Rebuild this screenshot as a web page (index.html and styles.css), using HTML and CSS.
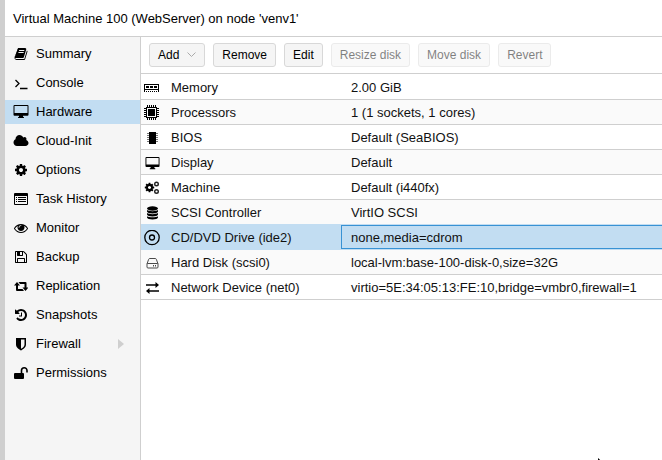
FILE: index.html
```html
<!DOCTYPE html>
<html lang="en">
<head>
<meta charset="utf-8">
<title>Virtual Machine 100</title>
<link rel="stylesheet" href="styles.css">
</head>
<body>
<svg class="defs" aria-hidden="true">
  <symbol id="cog" viewBox="0 0 1792 1792"><path d="M1152 896q0-106-75-181t-181-75-181 75-75 181 75 181 181 75 181-75 75-181zm512-109v222q0 12-8 23t-20 13l-185 28q-19 54-39 91 35 50 107 138 10 12 10 25t-9 23q-27 37-99 108t-94 71q-12 0-26-9l-138-108q-44 23-91 38-16 136-29 186-7 28-36 28h-222q-14 0-24.500-8.500t-11.500-21.500l-28-184q-49-16-90-37l-141 107q-10 9-25 9-14 0-25-11-126-114-165-168-7-10-7-23 0-12 8-23 15-21 51-66.500t54-70.500q-27-50-41-99l-183-27q-13-2-21-12.500t-8-23.500v-222q0-12 8-23t19-13l186-28q14-46 39-92-40-57-107-138-10-12-10-24 0-10 9-23 26-36 98.500-107.500t94.500-71.500q13 0 26 10l138 107q44-23 91-38 16-136 29-186 7-28 36-28h222q14 0 24.500 8.500t11.500 21.500l28 184q49 16 90 37l142-107q9-9 24-9 13 0 25 10 129 119 165 170 7 8 7 22 0 12-8 23-15 21-51 66.500t-54 70.500q26 50 41 98l183 28q13 2 21 12.500t8 23.500z"/></symbol>
  <symbol id="desktop" viewBox="0 0 16 16"><path fill-rule="evenodd" d="M1.500 1h13a1 1 0 0 1 1 1v8.700a1 1 0 0 1-1 1h-4.500v1l1 .6v.7h-6v-.7l1-.6v-1h-4.500a1 1 0 0 1-1-1v-8.700a1 1 0 0 1 1-1zm0 1v7h13v-7z"/></symbol>
</svg>
<main class="panel">
  <header class="title">Virtual Machine 100 (WebServer) on node 'venv1'</header>
  <div class="body">
    <nav class="menu">
      <a href="#summary"><svg viewBox="0 0 1792 1792"><path d="M1703 478q40 57 18 129l-275 906q-19 64-76.500 107.500t-122.500 43.500h-923q-77 0-148.500-53.500t-99.500-131.500q-24-67-2-127 0-4 3-27t4-37q1-8-3-21.500t-3-19.500q2-11 8-21t16.500-23.500 16.500-23.500q23-38 45-91.500t30-91.500q3-10 .5-30t-.5-28q3-11 17-28t17-23q21-36 42-92t25-90q1-9-2.500-32t.5-28q4-13 22-30.500t22-22.500q19-26 42.500-84.500t27.500-96.500q1-8-3-25.500t-2-26.500q2-8 9-18t18-23 17-21q8-12 16.500-30.500t15-35 16-36 19.500-32 26.500-23.500 36-11.500 47.500 5.500l-1 3q38-9 51-9h761q74 0 114 56t18 130l-274 906q-36 119-71.500 153.500t-128.500 34.500h-869q-27 0-38 15-11 16-1 43 24 70 144 70h923q29 0 56-15.500t35-41.500l300-987q7-22 5-57 38 15 59 43zm-1064 2q-4 13 2 22.500t20 9.500h608q13 0 25.500-9.500t16.500-22.500l21-64q4-13-2-22.500t-20-9.500h-608q-13 0-25.500 9.500t-16.500 22.500zm-83 256q-4 13 2 22.500t20 9.500h608q13 0 25.500-9.500t16.500-22.500l21-64q4-13-2-22.500t-20-9.500h-608q-13 0-25.500 9.500t-16.500 22.500z"/></svg>Summary</a>
      <a href="#console"><svg viewBox="0 0 14 14"><path class="line" d="M1.500 4l3.500 3.500-3.500 3.500M6 12.500h7.500"/></svg>Console</a>
      <a href="#hardware" class="active" aria-current="page"><svg class="wide" viewBox="0 0 16 16"><use href="#desktop"/></svg>Hardware</a>
      <a href="#cloud-init"><svg class="wide" viewBox="0 0 2048 1792"><path d="M1984 1152q0 159-112.500 271.500t-271.500 112.500h-1088q-185 0-316.500-131.500t-131.500-316.500q0-132 71-241.500t187-163.500q-2-28-2-43 0-212 150-362t362-150q158 0 286.500 88t187.500 230q70-62 166-62 106 0 181 75t75 181q0 75-41 138 129 30 213 134.500t84 239.500z"/></svg>Cloud-Init</a>
      <a href="#options"><svg viewBox="0 0 1792 1792"><use href="#cog"/></svg>Options</a>
      <a href="#tasks"><svg viewBox="0 0 14 14"><path fill-rule="evenodd" d="M1 1h12a1 1 0 0 1 1 1v10a1 1 0 0 1-1 1h-12a1 1 0 0 1-1-1v-10a1 1 0 0 1 1-1zm0 3v8h12v-8z"/><path d="M2 5h1v1h-1zM4 5h8v1h-8zM2 7h1v1h-1zM4 7h8v1h-8zM2 9h1v1h-1zM4 9h8v1h-8z"/></svg>Task History</a>
      <a href="#monitor"><svg viewBox="0 0 1792 1792"><path d="M1664 960q-152-236-381-353 61 104 61 225 0 185-131.500 316.500t-316.500 131.500-316.500-131.500-131.500-316.500q0-121 61-225-229 117-381 353 133 205 333.500 326.500t434.500 121.500 434.500-121.500 333.500-326.500zm-720-384q0-20-14-34t-34-14q-125 0-214.500 89.500t-89.500 214.500q0 20 14 34t34 14 34-14 14-34q0-86 61-147t147-61q20 0 34-14t14-34zm848 384q0 34-20 69-140 230-376.500 368.500t-499.500 138.500-499.500-139-376.500-368q-20-35-20-69t20-69q140-229 376.500-368t499.500-139 499.500 139 376.500 368q20 35 20 69z"/></svg>Monitor</a>
      <a href="#backup"><svg viewBox="0 0 1792 1792"><path d="M512 1536h768v-384h-768v384zm896 0h128v-896q0-14-10-38.500t-20-34.500l-281-281q-10-10-34-20t-39-10v416q0 40-28 68t-68 28h-576q-40 0-68-28t-28-68v-416h-128v1280h128v-416q0-40 28-68t68-28h832q40 0 68 28t28 68v416zm-384-928v-320q0-13-9.500-22.500t-22.500-9.500h-192q-13 0-22.500 9.500t-9.500 22.500v320q0 13 9.500 22.500t22.500 9.500h192q13 0 22.500-9.500t9.500-22.500zm640 32v928q0 40-28 68t-68 28h-1344q-40 0-68-28t-28-68v-1344q0-40 28-68t68-28h928q40 0 88 20t76 48l280 280q28 28 48 76t20 88z"/></svg>Backup</a>
      <a href="#replication"><svg viewBox="0 0 14 14"><path d="M0 6.500l3-3.500 3 3.500h-2v3.500h4.500l1.500 2h-7a1 1 0 0 1-1-1v-4.500zM14.500 8.500l-3 3.500-3-3.500h2v-3.500h-4.500l-1.500-2h7a1 1 0 0 1 1 1v4.500z"/></svg>Replication</a>
      <a href="#snapshots"><svg viewBox="0 0 1792 1792"><path d="M1664 896q0 156-61 298t-164 245-245 164-298 61q-172 0-327-72.500t-264-204.500q-7-10-6.500-22.500t8.500-20.500l137-138q10-9 25-9 16 2 23 12 73 95 179 147t225 52q104 0 198.500-40.500t163.500-109.500 109.500-163.500 40.500-198.500-40.500-198.500-109.500-163.500-163.500-109.500-198.500-40.500q-98 0-188 35.500t-160 101.500l137 138q31 30 14 69-17 40-59 40h-448q-26 0-45-19t-19-45v-448q0-42 40-59 39-17 69 14l130 129q107-101 244.500-156.500t284.500-55.500q156 0 298 61t245 164 164 245 61 298zm-640-288v448q0 14-9 23t-23 9h-320q-14 0-23-9t-9-23v-64q0-14 9-23t23-9h224v-352q0-14 9-23t23-9h64q14 0 23 9t9 23z"/></svg>Snapshots</a>
      <a href="#firewall"><svg viewBox="0 0 14 14"><path fill-rule="evenodd" d="M2 1h10v6.500c0 3-2.500 4.500-5 6-2.500-1.500-5-3-5-6zM7 2.600v9.200c2-1.200 3.500-2.300 3.500-4.300v-4.900z"/></svg>Firewall<svg class="more" viewBox="0 0 6 10"><path d="M0 0l6 5-6 5z"/></svg></a>
      <a href="#permissions"><svg viewBox="0 0 14 14"><path d="M1 7h8a1 1 0 0 1 1 1v4a1 1 0 0 1-1 1h-8a1 1 0 0 1-1-1v-4a1 1 0 0 1 1-1z"/><path class="lock" d="M7.500 7v-2.500a2.500 2.500 0 0 1 5.500 0v2"/></svg>Permissions</a>
    </nav>
    <section class="content">
      <div class="toolbar">
        <button type="button">Add<svg class="caret" viewBox="0 0 9 6"><path d="M.5 .5l4 4 4-4"/></svg></button>
        <button type="button">Remove</button>
        <button type="button">Edit</button>
        <button type="button" disabled>Resize disk</button>
        <button type="button" disabled>Move disk</button>
        <button type="button" disabled>Revert</button>
      </div>
      <table>
        <colgroup><col class="c-icon"><col class="c-name"><col></colgroup>
        <tbody>
          <tr><td><svg viewBox="0 0 16 16"><path fill-rule="evenodd" d="M0 4h15v6h-15zM1 5v4h13v-4z"/><path d="M2 6h3v2h-3zM6 6h3v2h-3zM10 6h3v2h-3zM0 10h1v2h-1zM2 11h1v1h-1zM4 11h1v1h-1zM6 11h1v1h-1zM8 11h1v1h-1zM10 11h1v1h-1zM12 11h1v1h-1zM14 10h1v2h-1z"/></svg></td><td>Memory</td><td>2.00 GiB</td></tr>
          <tr><td><svg viewBox="0 0 16 16"><path fill-rule="evenodd" d="M2 2h11v11h-11zM3 3v9h9v-9z"/><path d="M4 4h7v7h-7zM3 0h1v2h-1zM5 0h1v2h-1zM7 0h1v2h-1zM9 0h1v2h-1zM11 0h1v2h-1zM3 13h1v2h-1zM5 13h1v2h-1zM7 13h1v2h-1zM9 13h1v2h-1zM11 13h1v2h-1zM0 3h2v1h-2zM0 5h2v1h-2zM0 7h2v1h-2zM0 9h2v1h-2zM0 11h2v1h-2zM13 3h2v1h-2zM13 5h2v1h-2zM13 7h2v1h-2zM13 9h2v1h-2zM13 11h2v1h-2z"/></svg></td><td>Processors</td><td>1 (1 sockets, 1 cores)</td></tr>
          <tr><td><svg viewBox="0 0 16 16"><path d="M5 2h7v12h-7z"/><path class="pins" d="M3 3h2v1h-2zM3 5h2v1h-2zM3 7h2v1h-2zM3 9h2v1h-2zM3 11h2v1h-2zM12 3h2v1h-2zM12 5h2v1h-2zM12 7h2v1h-2zM12 9h2v1h-2zM12 11h2v1h-2z"/></svg></td><td>BIOS</td><td>Default (SeaBIOS)</td></tr>
          <tr><td><svg viewBox="0 0 16 16"><use href="#desktop" x="1" y="1" width="15" height="15"/></svg></td><td>Display</td><td>Default</td></tr>
          <tr><td><svg viewBox="0 0 16 16"><use href="#cog" x="0" y="2" width="11" height="11"/><circle class="gear" cx="12.500" cy="4" r="1.800"/><circle class="gear" cx="12.500" cy="11.500" r="1.800"/></svg></td><td>Machine</td><td>Default (i440fx)</td></tr>
          <tr><td><svg viewBox="0 0 16 16"><ellipse cx="8.500" cy="3.500" rx="5.500" ry="2.200"/><path d="M3 5c2 1.500 9 1.500 11 0v1.500c0 2.500-11 2.500-11 0zM3 8.100c2 1.500 9 1.500 11 0v1.500c0 2.500-11 2.500-11 0zM3 11.200c2 1.500 9 1.500 11 0v1.300c0 2.500-11 2.500-11 0z"/></svg></td><td>SCSI Controller</td><td>VirtIO SCSI</td></tr>
          <tr class="selected"><td><svg viewBox="0 0 16 16"><circle class="line" cx="8" cy="7.500" r="7.200"/><circle class="line" cx="8" cy="7.500" r="2.500"/></svg></td><td>CD/DVD Drive (ide2)</td><td class="focus">none,media=cdrom</td></tr>
          <tr><td><svg class="soft" viewBox="0 0 16 16"><path class="thin" d="M3 9l1.600-4.600q.3-.9 1.200-.9h5.400q.9 0 1.200.9l1.600 4.600M3.500 8.500h10q.5 0 .5.500v3q0 1-1 1h-9q-1 0-1-1v-3q0-.5.5-.5z"/><path d="M9 10h1v1.500h-1zM11 10h1v1.500h-1z"/></svg></td><td>Hard Disk (scsi0)</td><td>local-lvm:base-100-disk-0,size=32G</td></tr>
          <tr><td><svg viewBox="0 0 16 16"><path d="M2 4.300h9.500v-2.300l3.500 3-3.500 3v-2.200h-9.500zM15 11.700h-9.500v2.300l-3.500-3 3.500-3v2.200h9.500z"/></svg></td><td>Network Device (net0)</td><td>virtio=5E:34:05:13:FE:10,bridge=vmbr0,firewall=1</td></tr>
        </tbody>
      </table>
    </section>
  </div>
</main>
<svg class="pointer" viewBox="0 0 12 18" aria-hidden="true"><path d="M0 0v16l4-4 3 6 2-1-3-6h6z"/></svg>
</body>
</html>
```
FILE: styles.css
```css
* { box-sizing: border-box; }

body {
  margin: 0;
  height: 100vh;
  overflow: hidden;
  background: #fff;
  color: #000;
  font: 13px/24px "Liberation Sans", Arial, sans-serif;
}

.defs { display: none; }

.panel {
  display: flex;
  flex-direction: column;
  height: 100%;
  border-left: 5px solid #cfcfcf;
}

.title {
  height: 37px;
  padding: 0 8px;
  line-height: 37px;
  border-bottom: 1px solid #cfcfcf;
}

.body { display: flex; flex: 1; min-height: 0; }

.menu {
  display: flex;
  flex-direction: column;
  gap: 5px;
  width: 136px;
  flex: none;
  padding-top: 5px;
  background: #f5f5f5;
  border-right: 1px solid #cfcfcf;
}

.menu a {
  display: flex;
  align-items: center;
  gap: 8px;
  padding: 0 16px 0 9px;
  color: #000;
  text-decoration: none;
}

.menu a.active { background: #c2ddf2; }

.menu svg { width: 14px; height: 14px; flex: none; }
.menu svg.wide { width: 16px; height: 16px; margin: 0 -1px; }
.menu svg.more { width: 6px; height: 10px; margin-left: auto; fill: #cfcfcf; }

.line { fill: none; stroke: #000; stroke-width: 1.3; }
.lock { fill: none; stroke: #000; stroke-width: 1.6; }
.thin { fill: none; stroke: #000; stroke-width: 1; }
.gear { fill: none; stroke: #222; stroke-width: 1.4; }
.pins { fill: #777; }
.soft { opacity: .7; }

.content { flex: 1; min-width: 0; overflow: hidden; }

.toolbar {
  display: flex;
  gap: 8px;
  padding: 6px 8px;
  border-bottom: 1px solid #cfcfcf;
}

.toolbar button {
  display: flex;
  align-items: center;
  gap: 8px;
  height: 24px;
  padding: 0 8px;
  font: inherit;
  font-size: 12px;
  line-height: 22px;
  color: #000;
  background: #f5f5f5;
  border: 1px solid #d8d8d8;
  border-radius: 3px;
}

.toolbar button:disabled { opacity: .5; }

.caret { width: 9px; height: 6px; fill: none; stroke: #aaa; }

table {
  width: 100%;
  table-layout: fixed;
  border-collapse: separate;
  border-spacing: 0;
  padding-top: 1px;
}

.c-icon { width: 20px; }
.c-name { width: 180px; }

td {
  height: 25px;
  padding: 2px 10px 0;
  line-height: 22px;
  color: #111;
  white-space: nowrap;
  border-bottom: 1px solid #cfcfcf;
}

td:first-child { padding: 1px 0 0 3px; }
td svg { display: block; width: 16px; height: 16px; }

tr:nth-child(even) td { background: #fafafa; }
tr:has(+ .selected) td { border-color: #c2ddf2; }
tr.selected td { background: #c2ddf2; border-color: #c2ddf2; }
tr.selected td.focus { box-shadow: inset 1px 1px #3892d4, inset 0 -1px #3892d4; }

.pointer {
  position: absolute;
  left: 598px;
  bottom: -16px;
  width: 12px;
  height: 18px;
}
```
